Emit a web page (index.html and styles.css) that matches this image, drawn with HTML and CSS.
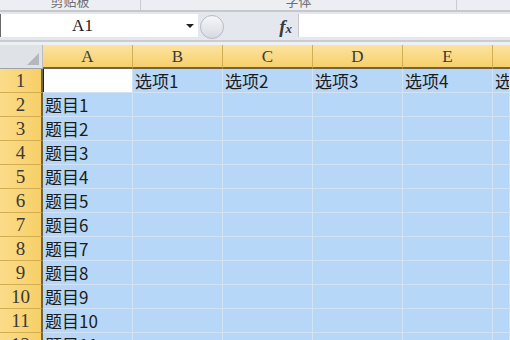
FILE: index.html
```html
<!DOCTYPE html>
<html lang="zh-CN">
<head>
    <meta charset="UTF-8">
    <title>Excel</title>
    <link rel="stylesheet" href="styles.css">
</head>
<body>
    <!-- Ribbon strip (cut off at the top) -->
    <div class="ribbon">
        <div class="group g1"><span>剪贴板</span></div>
        <div class="group g2"><span>字体</span></div>
        <div class="group g3"></div>
    </div>

    <!-- Formula bar -->
    <div class="fbar">
        <div class="namebox">
            <span class="name">A1</span>
            <span class="arrow"></span>
        </div>
        <div class="fbtns">
            <span class="roundbtn"></span>
            <span class="fx"><i>f</i><i class="x">x</i></span>
        </div>
        <div class="finput"></div>
    </div>
    <div class="gap"></div>

    <!-- Sheet -->
    <div class="sheet">
        <div class="corner"><span class="tri"></span></div>
        <div class="colhead">A</div>
        <div class="colhead">B</div>
        <div class="colhead">C</div>
        <div class="colhead">D</div>
        <div class="colhead">E</div>
        <div class="colhead last"></div>

        <div class="rowhead">1</div>
        <div class="cell active"></div>
        <div class="cell">选项1</div>
        <div class="cell">选项2</div>
        <div class="cell">选项3</div>
        <div class="cell">选项4</div>
        <div class="cell">选</div>

        <div class="rowhead">2</div><div class="cell">题目1</div><div class="cell"></div><div class="cell"></div><div class="cell"></div><div class="cell"></div><div class="cell"></div>
        <div class="rowhead">3</div><div class="cell">题目2</div><div class="cell"></div><div class="cell"></div><div class="cell"></div><div class="cell"></div><div class="cell"></div>
        <div class="rowhead">4</div><div class="cell">题目3</div><div class="cell"></div><div class="cell"></div><div class="cell"></div><div class="cell"></div><div class="cell"></div>
        <div class="rowhead">5</div><div class="cell">题目4</div><div class="cell"></div><div class="cell"></div><div class="cell"></div><div class="cell"></div><div class="cell"></div>
        <div class="rowhead">6</div><div class="cell">题目5</div><div class="cell"></div><div class="cell"></div><div class="cell"></div><div class="cell"></div><div class="cell"></div>
        <div class="rowhead">7</div><div class="cell">题目6</div><div class="cell"></div><div class="cell"></div><div class="cell"></div><div class="cell"></div><div class="cell"></div>
        <div class="rowhead">8</div><div class="cell">题目7</div><div class="cell"></div><div class="cell"></div><div class="cell"></div><div class="cell"></div><div class="cell"></div>
        <div class="rowhead">9</div><div class="cell">题目8</div><div class="cell"></div><div class="cell"></div><div class="cell"></div><div class="cell"></div><div class="cell"></div>
        <div class="rowhead">10</div><div class="cell">题目9</div><div class="cell"></div><div class="cell"></div><div class="cell"></div><div class="cell"></div><div class="cell"></div>
        <div class="rowhead">11</div><div class="cell">题目10</div><div class="cell"></div><div class="cell"></div><div class="cell"></div><div class="cell"></div><div class="cell"></div>
        <div class="rowhead">12</div><div class="cell">题目11</div><div class="cell"></div><div class="cell"></div><div class="cell"></div><div class="cell"></div><div class="cell"></div>
    </div>
</body>
</html>
```

FILE: styles.css
```css
/* Base */
body {
    margin: 0;
    width: 510px;
    height: 340px;
    overflow: hidden;
    background: #ffffff;
    font-family: "Noto Sans CJK SC", sans-serif;
}

/* Ribbon strip */
.ribbon {
    display: flex;
    height: 10px;
    background: #eceef2;
    border-bottom: 2px solid #c5c9cf;
    overflow: hidden;
}

.group {
    border-right: 1px solid #c8ccd2;
    text-align: center;
    color: #6b6f75;
    font-size: 13px;
    line-height: 13px;
}

.group span {
    display: block;
    margin-top: -6px;
}

.g1 { width: 140px; }
.g2 { width: 315px; }
.g3 { flex: 1; border-right: none; }

/* Formula bar */
.fbar {
    display: flex;
    height: 26px;
    background: #e4e8ee;
    padding-top: 2px;
    border-bottom: 2px solid #c9ccd1;
}

.namebox {
    width: 197px;
    height: 23px;
    background: #fff;
    display: flex;
    align-items: center;
    border-left: 1px solid #6a6a6a;
}

.name {
    flex: 1;
    text-align: center;
    font-family: "Liberation Serif", serif;
    font-size: 17px;
    color: #222;
    padding-right: 22px;
}

.arrow {
    width: 0;
    height: 0;
    border-left: 4px solid transparent;
    border-right: 4px solid transparent;
    border-top: 4px solid #222;
    margin-right: 4px;
}

.fbtns {
    width: 100px;
    display: flex;
    align-items: center;
}

.roundbtn {
    width: 24px;
    height: 24px;
    margin-left: 2px;
    border-radius: 50%;
    background: linear-gradient(#f6f7f9, #d6dae0);
    border: 1px solid #b8bcc2;
    box-sizing: border-box;
}

.fx {
    margin-left: auto;
    margin-right: 6px;
    font-family: "Liberation Serif", serif;
    font-weight: bold;
    font-size: 19px;
    color: #3a3a3a;
}

.fx .x {
    font-size: 13px;
}

.finput {
    flex: 1;
    height: 23px;
    background: #fff;
    border-left: 1px solid #c5c9cf;
}

.gap {
    height: 3px;
    background: #eef0f3;
}

/* Sheet grid */
.sheet {
    display: grid;
    grid-template-columns: 43px repeat(5, 90px) 1fr;
    grid-auto-rows: 24px;
    background: #b7d7f8;
}

.corner {
    background: #dfe3e8;
    border-right: 1px solid #b9bdc2;
    border-bottom: 1px solid #9fa3a8;
    position: relative;
}

.tri {
    position: absolute;
    right: 3px;
    bottom: 3px;
    width: 0;
    height: 0;
    border-left: 12px solid transparent;
    border-bottom: 12px solid #b4b8bd;
}

.colhead {
    background: linear-gradient(#fbe3a1, #f7d06a);
    border-right: 1px solid #d2ae52;
    border-bottom: 2px solid #6f6447;
    font-family: "Liberation Serif", serif;
    font-size: 17px;
    line-height: 23px;
    text-align: center;
    color: #3a3a3a;
}

.colhead.last {
    border-right: none;
}

.rowhead {
    background: linear-gradient(90deg, #fbdc8a, #f7cf66);
    border-right: 2px solid #6f6447;
    border-bottom: 1px solid #d2ae52;
    font-family: "Liberation Serif", serif;
    font-size: 19px;
    line-height: 23px;
    text-align: center;
    color: #3a3a3a;
}

.cell {
    border-right: 1px solid #d3e3f4;
    border-bottom: 1px solid #d3e3f4;
    font-size: 17px;
    line-height: 23px;
    padding-left: 2px;
    color: #1c1c1c;
    white-space: nowrap;
    overflow: hidden;
}

.cell.active {
    background: #fff;
    box-shadow: inset 1px 0 0 #222;
}
```
